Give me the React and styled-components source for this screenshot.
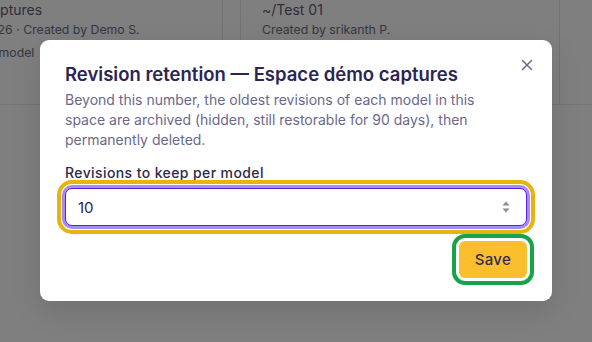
import React from "react";
import styled, { createGlobalStyle } from "styled-components";

const GlobalStyle = createGlobalStyle`
  html, body {
    margin: 0;
    padding: 0;
    background: #ffffff;
    font-family: Inter, "Noto Sans", "Liberation Sans", sans-serif;
  }
  * { box-sizing: border-box; }
`;

const Page = styled.div`
  width: 592px;
  height: 342px;
  overflow: hidden;
  position: relative;
  background: #ffffff;
`;

const CardRow = styled.div`
  display: grid;
  grid-template-columns: 369px 320px;
  gap: 17px;
  margin-left: -146px;
  margin-top: -14px;
  border-bottom: 1px solid #e8e8ee;
`;

const Card = styled.div`
  height: 118px;
  border: 1px solid #e6e6ee;
  border-top: none;
  border-bottom: none;
  padding: 14px 21px;
  display: flex;
  flex-direction: column;
  white-space: nowrap;
`;

const CardTitle = styled.div`
  font-size: 14px;
  line-height: 20px;
  color: #5e5d72;
`;

const CardMeta = styled.div`
  font-size: 12.3px;
  line-height: 18px;
  color: #6e6d82;
  margin-top: ${(p) => p.$gap || 0}px;
`;

const Overlay = styled.div`
  position: absolute;
  inset: 0;
  background: rgba(0, 0, 0, 0.5);
  display: flex;
  justify-content: center;
  align-items: flex-start;
  padding-top: 40px;
`;

const Modal = styled.div`
  position: relative;
  width: 512px;
  background: #ffffff;
  border-radius: 9px;
  box-shadow: 0 10px 30px rgba(0, 0, 0, 0.12);
  padding: 22px 25px 23px;
  display: flex;
  flex-direction: column;
`;

const CloseButton = styled.button`
  position: absolute;
  top: 14px;
  right: 14px;
  width: 22px;
  height: 22px;
  border: none;
  background: none;
  padding: 0;
  display: flex;
  align-items: center;
  justify-content: center;
  color: #6b6889;
  cursor: pointer;
`;

const Title = styled.h2`
  margin: 0;
  font-size: 18.5px;
  line-height: 24px;
  font-weight: 600;
  color: #2a2553;
`;

const Description = styled.p`
  margin: 4px 0 0;
  max-width: 430px;
  font-size: 14px;
  line-height: 20px;
  color: #6b6889;
`;

const Label = styled.label`
  margin-top: 13px;
  font-size: 14px;
  line-height: 20px;
  font-weight: 500;
  letter-spacing: 0.4px;
  color: #2e2a48;
`;

const Field = styled.div`
  position: relative;
  margin-top: 5px;
`;

const NumberInput = styled.input`
  width: 100%;
  height: 38px;
  border: 1px solid #5b21d6;
  border-radius: 7px;
  padding: 0 12px;
  font-family: inherit;
  font-size: 15px;
  color: #2a2553;
  background: #ffffff;
  box-shadow: 0 0 0 3px #a98bf5;
  outline: 4px solid #e9b20c;
  outline-offset: 4px;
`;

const Spinner = styled.span`
  position: absolute;
  right: 17px;
  top: 50%;
  transform: translateY(-50%);
  display: flex;
  color: #8a879f;
`;

const Footer = styled.div`
  display: flex;
  justify-content: flex-end;
  margin-top: 15px;
`;

const SaveButton = styled.button`
  height: 37px;
  padding: 0 16px;
  border: none;
  border-radius: 6px;
  background: #fbbf2e;
  font-family: inherit;
  font-size: 15px;
  font-weight: 500;
  letter-spacing: 0.3px;
  color: #2e2a4f;
  outline: 4px solid #17a34a;
  outline-offset: 3px;
  cursor: pointer;
`;

export default function App() {
  return (
    <Page>
      <GlobalStyle />
      <CardRow>
        <Card>
          <CardTitle>~/Espace démo captures</CardTitle>
          <CardMeta $gap={1}>Last edited 2026-01-26 · Created by Demo S.</CardMeta>
          <CardMeta $gap={5}>Max 10 revisions per model</CardMeta>
        </Card>
        <Card>
          <CardTitle>~/Test 01</CardTitle>
          <CardMeta $gap={1}>Created by srikanth P.</CardMeta>
        </Card>
      </CardRow>
      <Overlay>
        <Modal role="dialog">
          <CloseButton aria-label="Close">
            <svg width="12" height="12" viewBox="0 0 12 12" fill="none">
              <path d="M1.5 1.5L10.5 10.5M10.5 1.5L1.5 10.5" stroke="currentColor" strokeWidth="1.5" strokeLinecap="round" />
            </svg>
          </CloseButton>
          <Title>Revision retention — Espace démo captures</Title>
          <Description>
            Beyond this number, the oldest revisions of each model in this space are archived (hidden, still
            restorable for 90 days), then permanently deleted.
          </Description>
          <Label htmlFor="keep">Revisions to keep per model</Label>
          <Field>
            <NumberInput id="keep" type="text" defaultValue="10" />
            <Spinner>
              <svg width="8" height="12" viewBox="0 0 8 12">
                <path d="M4 0.5L7.5 4.5H0.5Z" fill="currentColor" />
                <path d="M4 11.5L7.5 7.5H0.5Z" fill="currentColor" />
              </svg>
            </Spinner>
          </Field>
          <Footer>
            <SaveButton>Save</SaveButton>
          </Footer>
        </Modal>
      </Overlay>
    </Page>
  );
}
